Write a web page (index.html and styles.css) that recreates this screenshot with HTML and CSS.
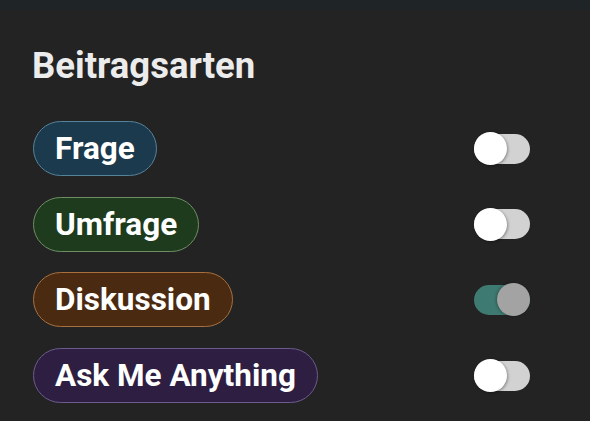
FILE: index.html
```html
<!DOCTYPE html>
<html lang="de">
<head>
<meta charset="utf-8">
<link rel="stylesheet" href="styles.css">
</head>
<body>
<div class="topbar"></div>
<main class="panel">
  <h2 class="title">Beitragsarten</h2>
  <ul class="list">
    <li class="row">
      <span class="pill pill-frage">Frage</span>
      <span class="toggle"><span class="thumb"></span></span>
    </li>
    <li class="row">
      <span class="pill pill-umfrage">Umfrage</span>
      <span class="toggle"><span class="thumb"></span></span>
    </li>
    <li class="row">
      <span class="pill pill-diskussion">Diskussion</span>
      <span class="toggle on"><span class="thumb"></span></span>
    </li>
    <li class="row">
      <span class="pill pill-ama">Ask Me Anything</span>
      <span class="toggle"><span class="thumb"></span></span>
    </li>
  </ul>
</main>
</body>
</html>
```
FILE: styles.css
```css
html, body {
  margin: 0;
  padding: 0;
  background: #232323;
  font-family: Roboto, "Noto Sans", sans-serif;
  color: #f2f2f2;
  height: 100%;
  overflow: hidden;
}

.topbar {
  height: 10px;
  background: #1f2426;
}

.panel {
  padding: 33.5px 60px 0 32px;
}

.title {
  margin: 0;
  font-size: 36.5px;
  line-height: 44px;
  font-weight: 700;
  color: #ececec;
}

.list {
  list-style: none;
  margin: 33.5px 0 0 1px;
  padding: 0;
  display: flex;
  flex-direction: column;
  gap: 20.7px;
}

.row {
  display: flex;
  align-items: center;
  justify-content: space-between;
  height: 55px;
}

.pill {
  box-sizing: border-box;
  height: 55px;
  display: inline-flex;
  align-items: center;
  padding: 0 21px;
  border-radius: 28px;
  border: 1.5px solid;
  font-size: 31.5px;
  font-weight: 700;
  color: #ffffff;
}

.pill-frage {
  background: #1b3a4d;
  border-color: #55839a;
}

.pill-umfrage {
  background: #1e3b1d;
  border-color: #6d8f63;
}

.pill-diskussion {
  background: #4b2a12;
  border-color: #a8703f;
}

.pill-ama {
  background: #2e1f42;
  border-color: #6c5b8c;
}

.toggle {
  width: 56px;
  height: 30px;
  border-radius: 15px;
  background: #d2d2d2;
  display: flex;
  align-items: center;
  justify-content: flex-start;
}

.thumb {
  width: 33px;
  height: 33px;
  margin: -1.5px 0;
  border-radius: 50%;
  background: #ffffff;
  box-shadow: 1px 1px 3px rgba(0, 0, 0, 0.35);
}

.toggle.on {
  background: #3e7a71;
  justify-content: flex-end;
}

.toggle.on .thumb {
  background: #a3a3a3;
  box-shadow: -1px 0 3px rgba(0, 0, 0, 0.3);
}
```
